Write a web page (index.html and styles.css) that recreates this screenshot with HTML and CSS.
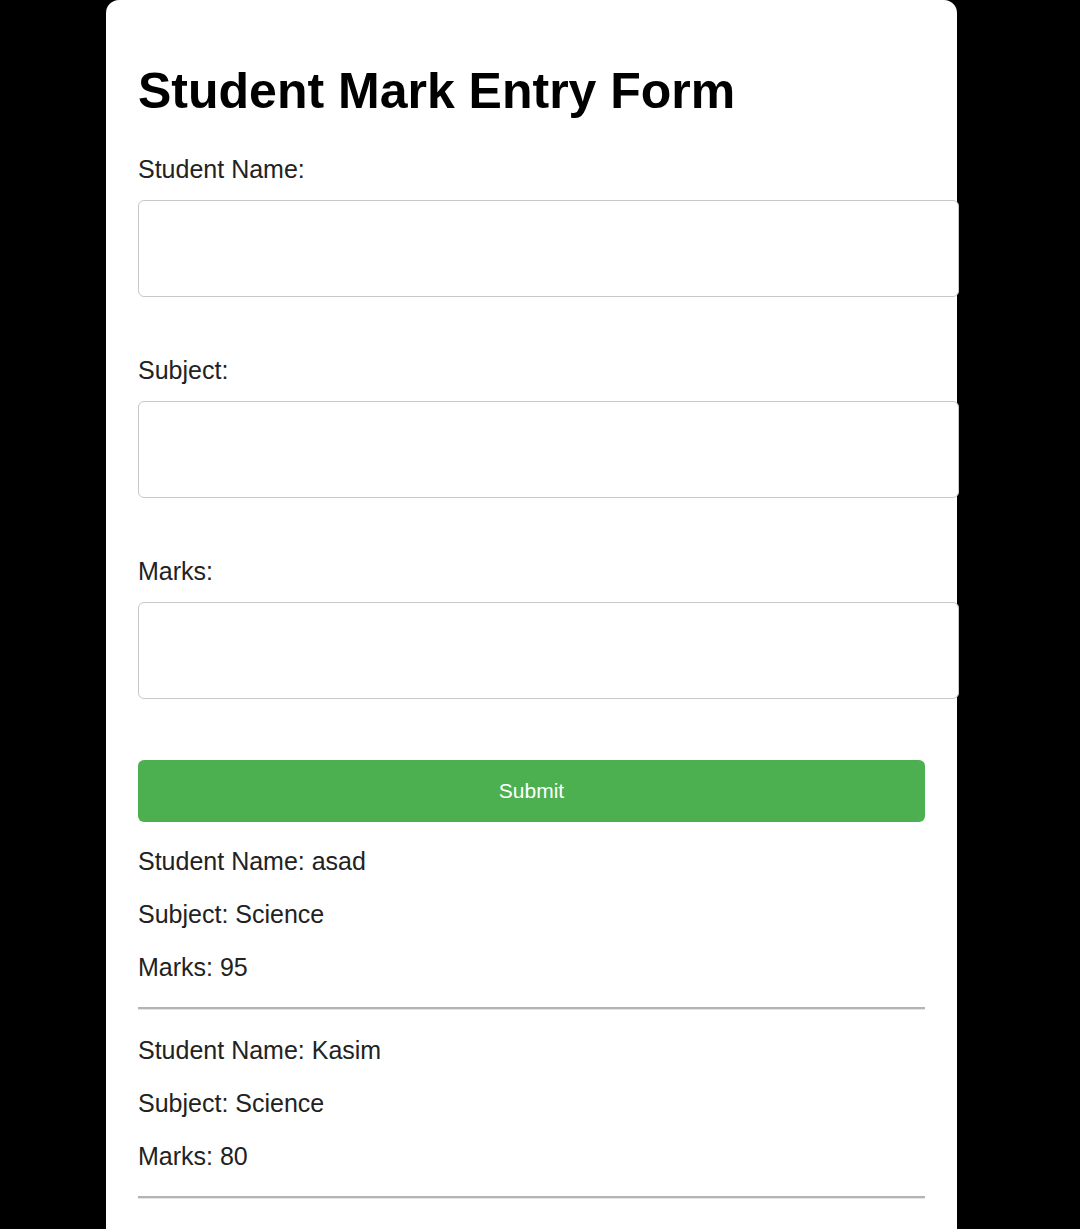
FILE: index.html
```html
<!DOCTYPE html>
<html lang="en">
<head>
<meta charset="utf-8">
<title>Student Mark Entry Form</title>
<link rel="stylesheet" href="styles.css">
</head>
<body>
<div class="card">
  <h1 class="title">Student Mark Entry Form</h1>
  <form class="form">
    <label class="label" for="name">Student Name:</label>
    <input class="input" id="name" type="text">
    <label class="label" for="subject">Subject:</label>
    <input class="input" id="subject" type="text">
    <label class="label" for="marks">Marks:</label>
    <input class="input" id="marks" type="number">
    <button class="submit" type="button">Submit</button>
  </form>
  <div class="records">
    <div class="record">
      <p class="line">Student Name: asad</p>
      <p class="line">Subject: Science</p>
      <p class="line">Marks: 95</p>
      <hr class="divider">
    </div>
    <div class="record">
      <p class="line">Student Name: Kasim</p>
      <p class="line">Subject: Science</p>
      <p class="line">Marks: 80</p>
      <hr class="divider">
    </div>
  </div>
</div>
</body>
</html>
```
FILE: styles.css
```css
html, body {
  margin: 0;
  background: #000;
}
body {
  padding: 0 17px 0 0;
  font-family: "Liberation Sans", Arial, sans-serif;
  font-size: 25px;
  color: #222;
}
.card {
  width: 851px;
  box-sizing: border-box;
  margin: 0 auto;
  padding: 32px 32px 40px;
  background: #fff;
  border-radius: 13px;
  box-shadow: 0 0 3px rgba(0, 0, 0, 0.25);
  min-height: 1300px;
}
.title {
  margin: 30px 0 35px;
  font-size: 50px;
  font-weight: bold;
  line-height: 58px;
  color: #000;
}
.form {
  display: block;
}
.label {
  display: block;
  line-height: 29px;
  margin-bottom: 16px;
}
.input {
  display: block;
  width: 100%;
  height: 95px;
  padding: 0 16px;
  margin: 0 0 59px;
  border: 1px solid #c8c8c8;
  border-radius: 6px;
  background: #fff;
  font: inherit;
  outline: none;
}
.submit {
  display: block;
  width: 100%;
  height: 62px;
  margin: 61px 0 0;
  border: none;
  border-radius: 6px;
  background: #4caf50;
  color: #fff;
  font-family: "Liberation Sans", Arial, sans-serif;
  font-size: 21px;
  cursor: pointer;
}
.records {
  display: block;
}
.line {
  margin: 25px 0;
  line-height: 28px;
}
.divider {
  margin: 26px 0;
  border: none;
  border-top: 2px solid #b4b4b4;
  border-bottom: 1px solid #e4e4e4;
  height: 0;
}
```
